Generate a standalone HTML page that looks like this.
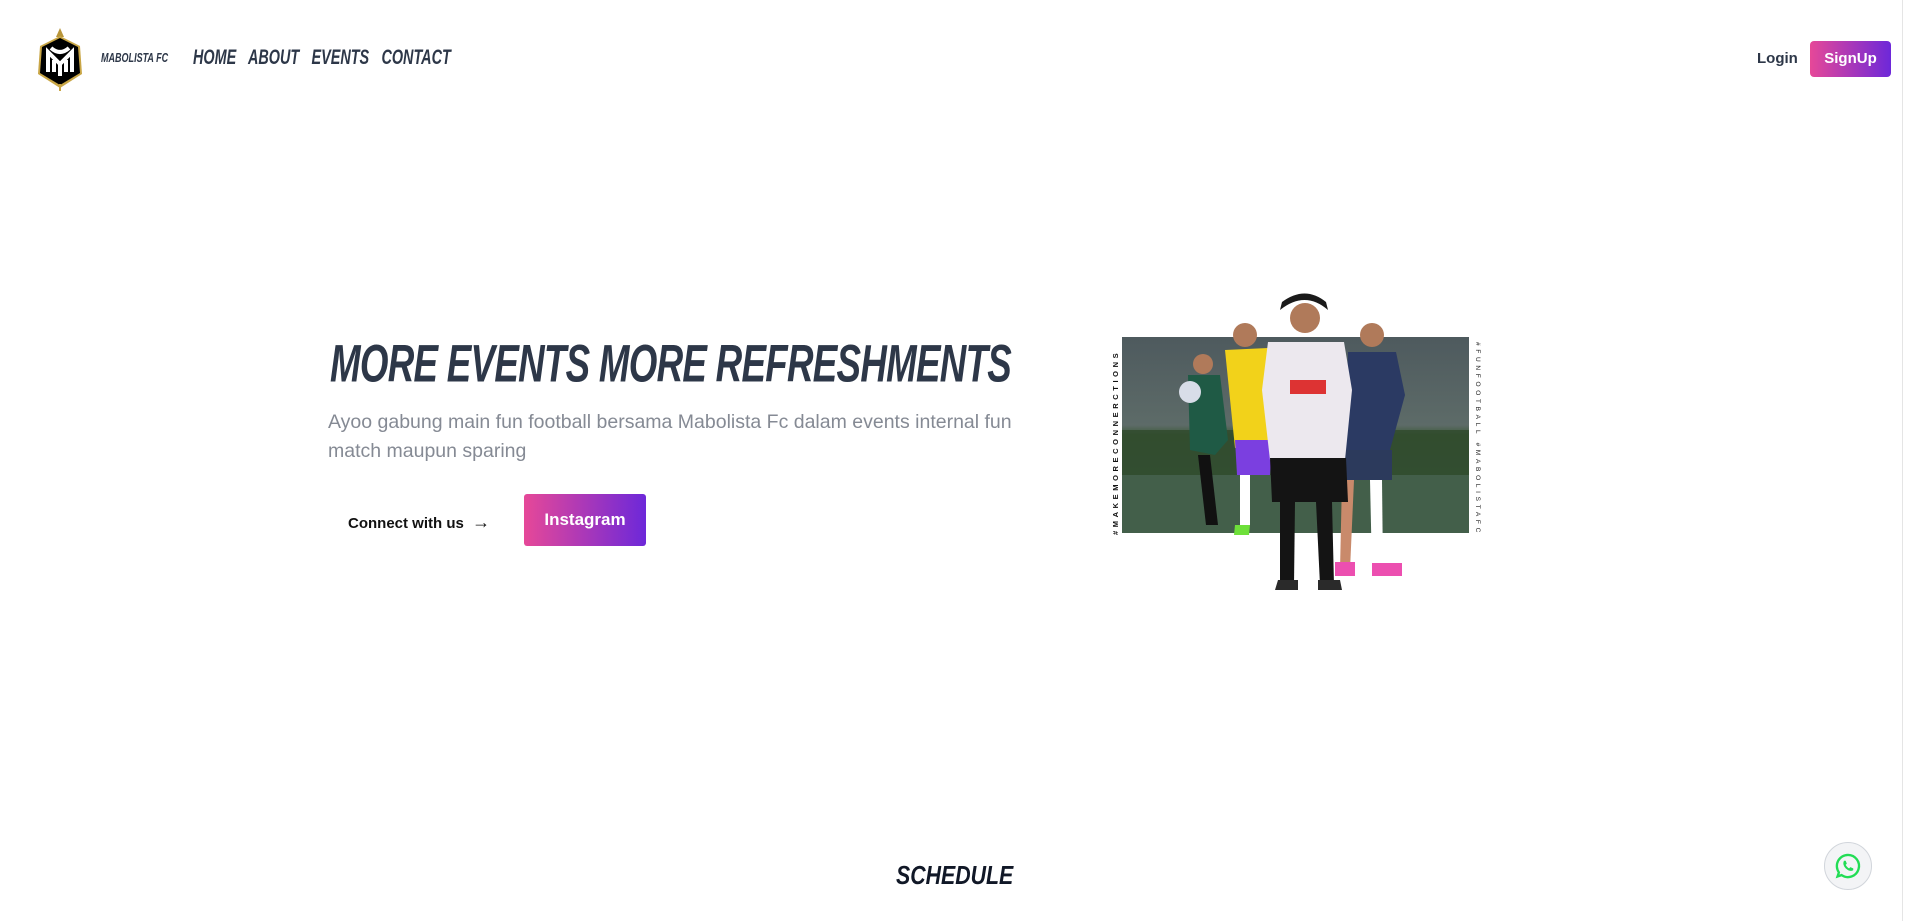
<!DOCTYPE html>
<html><head><meta charset="utf-8"><style>
*{margin:0;padding:0;box-sizing:border-box}
body{width:1905px;height:921px;background:#fff;position:relative;overflow:hidden;font-family:"Liberation Sans",sans-serif}
.abs{position:absolute}
.disp{font-family:"Liberation Sans",sans-serif;font-weight:bold;font-style:italic;color:#2d3748;white-space:nowrap;transform-origin:0 0}
</style></head><body>
<div class="abs" style="right:0;top:0;width:3px;height:921px;border-left:1px solid #e5e5e5"></div>
<svg class="abs" style="left:35px;top:28px" width="50" height="64" viewBox="0 0 50 64">
<polygon points="25,0 29,9 21,9" fill="#b8953a"/>
<polygon points="25,8 45,18 47,46 25,60 3,46 5,18" fill="#c9a646"/>
<polygon points="25,10 43,19 45,45 25,57 5,45 7,19" fill="#000"/>
<path d="M13,44 V24 L25,36 L37,24 V44 M19,44 V32 M31,44 V32 M25,36 V48 M16,20 Q25,28 34,20" stroke="#fff" stroke-width="4" fill="none"/>
<rect x="24" y="56" width="2" height="7" fill="#c9a646"/>
</svg>
<div class="abs disp" style="left:101px;top:51px;font-size:11px;transform:scaleX(0.82) scaleY(1.2)">MABOLISTA FC</div>
<div class="abs disp" style="left:193px;top:46px;font-size:20px;word-spacing:3px;transform:scaleX(0.72) scaleY(1.05)">HOME&nbsp; ABOUT&nbsp; EVENTS&nbsp; CONTACT</div>
<div class="abs" style="left:1757px;top:50px;font-size:15px;font-weight:bold;color:#2d3748">Login</div>
<div class="abs" style="left:1810px;top:41px;width:81px;height:36px;border-radius:4px;background:linear-gradient(90deg,#e64898,#6d28d9);color:#fff;font-weight:bold;font-size:15px;text-align:center;line-height:36px">SignUp</div>

<div class="abs disp" style="left:330px;top:333px;font-size:50px;letter-spacing:-1px;transform:scaleX(0.735) scaleY(1.05)">MORE EVENTS MORE REFRESHMENTS</div>
<div class="abs" style="left:328px;top:408px;width:700px;font-size:19.5px;line-height:29px;color:#858a94;font-weight:300">Ayoo gabung main fun football bersama Mabolista Fc dalam events internal fun match maupun sparing</div>
<div class="abs" style="left:348px;top:512px;font-size:15px;font-weight:bold;color:#111">Connect with us &nbsp;<span style="font-size:18px;font-weight:normal">→</span></div>
<div class="abs" style="left:524px;top:494px;width:122px;height:52px;border-radius:3px;background:linear-gradient(90deg,#e64898,#6d28d9);color:#fff;font-weight:bold;font-size:17px;text-align:center;line-height:52px">Instagram</div>

<svg class="abs" style="left:1100px;top:280px" width="400" height="330" viewBox="0 0 400 330">
<defs><linearGradient id="sky" x1="0" y1="0" x2="0" y2="1"><stop offset="0" stop-color="#4e5a5e"/><stop offset=".45" stop-color="#5d6b68"/><stop offset=".5" stop-color="#3d5a3a"/><stop offset=".7" stop-color="#3f5e44"/><stop offset="1" stop-color="#3a5a42"/></linearGradient></defs>
<rect x="22" y="57" width="347" height="196" fill="url(#sky)"/>
<rect x="22" y="150" width="347" height="45" fill="#2f4a2c" opacity=".8"/>
<rect x="22" y="195" width="347" height="58" fill="#435f4a"/>
<text transform="translate(18,255) rotate(-90)" font-size="7.5" font-weight="bold" letter-spacing="3.6" fill="#111" font-family="Liberation Sans">#MAKEMORECONNERCTIONS</text>
<text transform="translate(376,62) rotate(90)" font-size="6.5" letter-spacing="3.7" fill="#222" font-family="Liberation Sans">#FUNFOOTBALL #MABOLISTAFC</text>
<circle cx="103" cy="84" r="10" fill="#b07a5a"/>
<path d="M88,95 L120,95 L128,160 L115,175 L90,170 Z" fill="#1f5a45"/>
<path d="M98,175 L110,175 L118,245 L106,245 Z" fill="#111"/>
<circle cx="90" cy="112" r="11" fill="#d8dde8"/>
<circle cx="145" cy="55" r="12" fill="#b07a5a"/>
<path d="M125,70 L168,68 L178,160 L135,168 Z" fill="#f2d21a"/>
<path d="M135,160 L172,160 L170,195 L137,195 Z" fill="#7b3fe0"/>
<path d="M140,195 L150,195 L150,245 L140,245 Z" fill="#fff"/>
<path d="M135,245 L150,245 L149,255 L134,255 Z" fill="#6ee03a"/>
<circle cx="272" cy="55" r="12" fill="#b07a5a"/>
<path d="M248,72 L296,72 L305,115 L290,170 L245,170 Z" fill="#2b3a63"/>
<path d="M245,170 L292,170 L292,200 L245,200 Z" fill="#2c3a5c"/>
<path d="M270,200 L282,200 L283,290 L272,290 Z" fill="#fff"/>
<path d="M242,200 L254,200 L250,290 L240,290 Z" fill="#c98a6b"/>
<path d="M235,282 L255,282 L255,296 L235,296 Z" fill="#ec4fb0"/>
<path d="M272,283 L302,283 L302,296 L272,296 Z" fill="#ec4fb0"/>
<circle cx="205" cy="38" r="15" fill="#b07a5a"/>
<path d="M180,30 Q205,10 228,30 L226,22 Q205,5 182,22 Z" fill="#1a1a1a"/>
<path d="M168,62 L244,62 L252,110 L245,180 L170,180 L162,110 Z" fill="#ece8ee"/>
<path d="M170,178 L246,178 L248,222 L172,222 Z" fill="#141414"/>
<path d="M180,222 L195,222 L194,305 L180,305 Z" fill="#141414"/>
<path d="M216,222 L232,222 L234,305 L220,305 Z" fill="#141414"/>
<path d="M178,300 L198,300 L198,310 L175,310 Z" fill="#2a2a2a"/>
<path d="M218,300 L240,300 L242,310 L218,310 Z" fill="#2a2a2a"/>
<rect x="190" y="100" width="36" height="14" fill="#d33"/>
</svg>

<div class="abs disp" style="left:896px;top:860px;font-size:26px;color:#111827;transform:scaleX(0.82)">SCHEDULE</div>
<div class="abs" style="left:1824px;top:842px;width:48px;height:48px;border-radius:50%;background:#f3f4f6;border:1px solid #d1d5db"></div>
<svg class="abs" style="left:1834px;top:852px" width="28" height="28" viewBox="0 0 24 24"><path d="M12,2.5 A9.5,9.5 0 1 1 6.5,19.8 L3,21 L4.2,17.5 A9.5,9.5 0 0 1 12,2.5 Z" fill="none" stroke="#22dd55" stroke-width="2"/><path d="M8.5,7.5 L10,7.5 L11,10 L10,11 Q11.5,13.5 13,14 L14,13 L16.5,14 L16.5,15.5 Q14,17.5 10,14 Q7,11 8.5,7.5 Z" fill="#22dd55"/></svg>
</body></html>
